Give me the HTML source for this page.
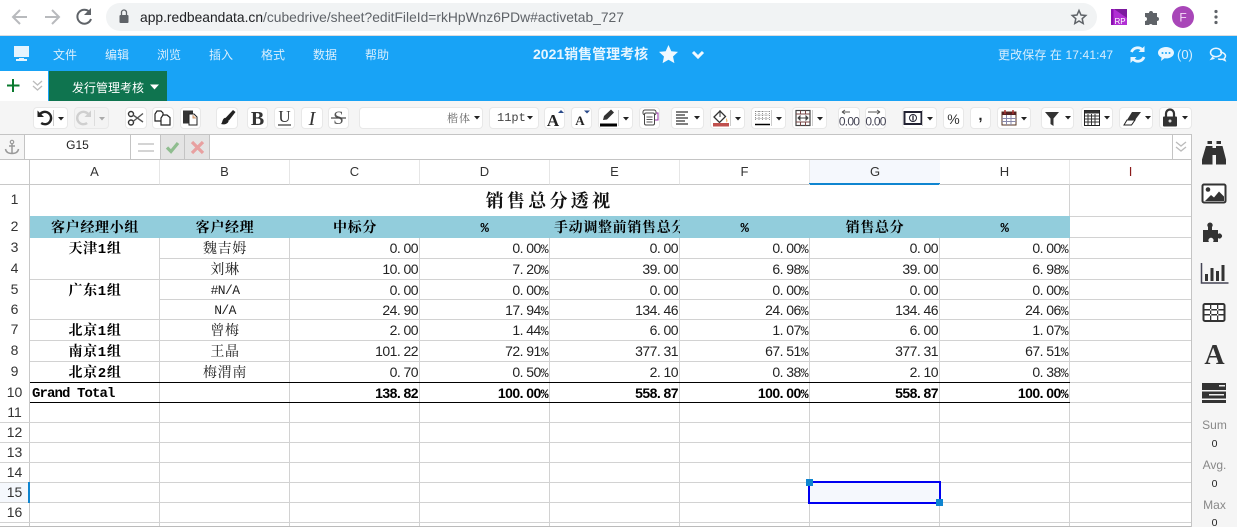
<!DOCTYPE html>
<html><head><meta charset="utf-8">
<style>
html,body{margin:0;padding:0;width:1237px;height:527px;overflow:hidden;background:#fff}
body{position:relative;font-family:"Liberation Sans","Noto Sans CJK SC",sans-serif}
div,span{position:absolute;box-sizing:border-box}
.nav{top:47px;font-size:12px;line-height:16px;color:#d8eefd;white-space:nowrap}
.b{top:107px;height:22px;background:#fff;border:1px solid #e8e8e8;border-radius:4px}
.h{left:30px;width:1161px;height:1px;background:#d2d2d2}
.v{top:184px;width:1px;height:342px;background:#d2d2d2}
.ch{top:160px;height:24px;width:130px;text-align:center;font-size:13px;line-height:24px;color:#333;border-right:1px solid #e6e6e6}
.rh{left:0;width:29px;text-align:center;font-size:14px;color:#333}
.r{left:30px;width:1040px;display:flex}
.r span{position:static;display:block;width:130px;height:100%;flex:none;padding-right:2px;white-space:nowrap;overflow:hidden;text-align:right;font-family:"Liberation Sans","Noto Serif CJK SC",sans-serif;font-size:14px;letter-spacing:-.55px;color:#222}
.r span i{font-style:normal;font-family:"Liberation Mono",monospace;font-size:13px}
.r span.m{text-align:center;padding:2px 0 0;letter-spacing:.67px;font-family:"Liberation Mono","Noto Serif CJK SC",serif;font-size:14px;color:#222}
.r span.g{font-weight:700;color:#000}
.side{left:1192px;width:45px;text-align:center;color:#888;font-size:12px;line-height:14px}
.z{color:#222;font-size:10.5px}
</style></head><body>

<!-- browser chrome -->
<div style="left:0;top:0;width:1237px;height:36px;background:#fff;border-bottom:1px solid #dadce0"></div>
<div style="left:106px;top:3px;width:991px;height:28px;border-radius:14px;background:#f1f3f4"></div>
<div style="left:140px;top:9px;height:17px;font-size:13.83px;line-height:17px;color:#5f6368;white-space:nowrap"><span style="position:static;color:#202124">app.redbeandata.cn</span>/cubedrive/sheet?editFileId=rkHpWnz6PDw#activetab_727</div>

<!-- blue header -->
<div style="left:0;top:36px;width:1237px;height:65px;background:#18a3f6"></div>
<div style="left:0;top:71px;width:48px;height:30px;background:#fff"></div>
<div style="left:48px;top:71px;width:119px;height:30px;background:#0f744f;border-left:1px solid #18a3f6"></div>
<div style="left:72px;top:80px;font-size:12px;line-height:16px;color:#fff;white-space:nowrap">发行管理考核</div>
<div class="nav" style="left:53px">文件</div>
<div class="nav" style="left:105px">编辑</div>
<div class="nav" style="left:157px">浏览</div>
<div class="nav" style="left:209px">插入</div>
<div class="nav" style="left:261px">格式</div>
<div class="nav" style="left:313px">数据</div>
<div class="nav" style="left:365px">帮助</div>
<div class="nav" style="left:533px;top:46px;font-size:14px;font-weight:700;color:#e6f5ff">2021销售管理考核</div>
<div class="nav" style="left:998px;font-size:12px;letter-spacing:.12px;color:#d8eefd">更改保存 在 17:41:47</div>
<div class="nav" style="left:1177px;font-size:13px;color:#d8eefd">(0)</div>

<!-- toolbar -->
<div style="left:0;top:101px;width:1237px;height:33px;background:#f5f5f5"></div>
<div class="b" style="left:33px;width:35px"></div>
<div class="b" style="left:74px;width:35px;background:#f3f3f3"></div>
<div class="b" style="left:125px;width:22px"></div>
<div class="b" style="left:152px;width:22px"></div>
<div class="b" style="left:180px;width:21px"></div>
<div class="b" style="left:216px;width:22px"></div>
<div class="b" style="left:247px;width:21px"></div>
<div class="b" style="left:274px;width:21px"></div>
<div class="b" style="left:301px;width:22px"></div>
<div class="b" style="left:328px;width:21px"></div>
<div class="b" style="left:359px;width:124px"></div>
<div class="b" style="left:489px;width:50px"></div>
<div class="b" style="left:544px;width:21px"></div>
<div class="b" style="left:571px;width:21px"></div>
<div class="b" style="left:598px;width:35px"></div>
<div class="b" style="left:639px;width:21px"></div>
<div class="b" style="left:671px;width:33px"></div>
<div class="b" style="left:710px;width:35px"></div>
<div class="b" style="left:751px;width:35px"></div>
<div class="b" style="left:792px;width:35px"></div>
<div class="b" style="left:838px;width:22px"></div>
<div class="b" style="left:865px;width:21px"></div>
<div class="b" style="left:902px;width:35px"></div>
<div class="b" style="left:943px;width:21px"></div>
<div class="b" style="left:970px;width:21px"></div>
<div class="b" style="left:997px;width:34px"></div>
<div class="b" style="left:1041px;width:33px"></div>
<div class="b" style="left:1081px;width:32px"></div>
<div class="b" style="left:1119px;width:34px"></div>
<div class="b" style="left:1159px;width:33px"></div>
<div style="left:447px;top:111px;font-family:'Noto Serif CJK SC',serif;font-size:11px;line-height:14px;color:#666;letter-spacing:1px">楷体</div>
<div style="left:497px;top:111px;font-family:'Liberation Mono',monospace;font-size:12px;line-height:14px;color:#444">11pt</div>

<!-- formula bar -->
<div style="left:0;top:134px;width:1192px;height:26px;background:#fff;border-top:1px solid #c4c4c4;border-bottom:1px solid #c4c4c4"></div>
<div style="left:0;top:135px;width:25px;height:24px;background:#f5f5f5;border-right:1px solid #c4c4c4"></div>
<div style="left:25px;top:137px;width:105px;text-align:center;font-size:12px;line-height:17px;color:#222">G15</div>
<div style="left:130px;top:135px;width:1px;height:24px;background:#c4c4c4"></div>
<div style="left:160px;top:135px;width:25px;height:24px;background:#e4e4e4;border-left:1px solid #c4c4c4;border-right:1px solid #c4c4c4"></div>
<div style="left:185px;top:135px;width:25px;height:24px;background:#e4e4e4;border-right:1px solid #c4c4c4"></div>
<div style="left:1172px;top:135px;width:1px;height:24px;background:#c4c4c4"></div>
<div style="left:1191px;top:134px;width:1px;height:393px;background:#c4c4c4"></div>

<!-- sidebar -->
<div style="left:1192px;top:134px;width:45px;height:393px;background:#f5f5f5"></div>

<!-- column headers -->
<div style="left:0;top:160px;width:1191px;height:24px;background:#fff"></div>
<div style="left:809px;top:160px;width:131px;height:25px;background:#f5f8fd;border-bottom:2px solid #0f85d0"></div>
<div class="ch" style="left:30px">A</div>
<div class="ch" style="left:160px">B</div>
<div class="ch" style="left:290px">C</div>
<div class="ch" style="left:420px">D</div>
<div class="ch" style="left:550px">E</div>
<div class="ch" style="left:680px">F</div>
<div class="ch" style="left:810px;border-right:0">G</div>
<div class="ch" style="left:940px">H</div>
<div class="ch" style="left:1070px;width:121px;color:#8b1a1a;border-right:0">I</div>
<div style="left:0;top:184px;width:1191px;height:1px;background:#c8c8c8"></div>
<div style="left:809px;top:183px;width:131px;height:2px;background:#0f85d0"></div>
<div style="left:29px;top:160px;width:1px;height:366px;background:#c8c8c8"></div>

<!-- grid lines -->
<div class="v" style="left:159px"></div>
<div class="v" style="left:289px"></div>
<div class="v" style="left:419px"></div>
<div class="v" style="left:549px"></div>
<div class="v" style="left:679px"></div>
<div class="v" style="left:809px"></div>
<div class="v" style="left:939px"></div>
<div class="v" style="left:1069px"></div>
<div class="h" style="top:216px"></div>
<div class="h" style="top:237px"></div>
<div class="h" style="top:258px"></div>
<div class="h" style="top:279px"></div>
<div class="h" style="top:299px"></div>
<div class="h" style="top:319px"></div>
<div class="h" style="top:340px"></div>
<div class="h" style="top:361px"></div>
<div class="h" style="top:382px"></div>
<div class="h" style="top:402px"></div>
<div class="h" style="top:422px;left:0;width:1191px"></div>
<div class="h" style="top:442px;left:0;width:1191px"></div>
<div class="h" style="top:462px;left:0;width:1191px"></div>
<div class="h" style="top:482px;left:0;width:1191px"></div>
<div class="h" style="top:502px;left:0;width:1191px"></div>
<div class="h" style="top:522px;left:0;width:1191px"></div>
<div class="h" style="top:526px;left:0;width:1191px;background:#bbb"></div>
<!-- title / merged cover -->
<div style="left:30px;top:185px;width:1039px;height:31px;background:#fff"></div>
<div style="left:30px;top:258px;width:129px;height:1px;background:#fff"></div>
<div style="left:30px;top:299px;width:129px;height:1px;background:#fff"></div>
<div style="left:30px;top:216px;width:1040px;height:22px;background:#92cddc"></div>
<div style="left:30px;top:382px;width:1040px;height:1px;background:#000"></div>
<div style="left:30px;top:402px;width:1040px;height:1px;background:#000"></div>

<!-- row headers -->
<div class="rh" style="top:191px;line-height:17px">1</div>
<div class="rh" style="top:218px;line-height:17px">2</div>
<div class="rh" style="top:239px;line-height:17px">3</div>
<div class="rh" style="top:260px;line-height:17px">4</div>
<div class="rh" style="top:281px;line-height:17px">5</div>
<div class="rh" style="top:301px;line-height:17px">6</div>
<div class="rh" style="top:321px;line-height:17px">7</div>
<div class="rh" style="top:342px;line-height:17px">8</div>
<div class="rh" style="top:363px;line-height:17px">9</div>
<div class="rh" style="top:384px;line-height:17px">10</div>
<div class="rh" style="top:404px;line-height:17px">11</div>
<div class="rh" style="top:424px;line-height:17px">12</div>
<div class="rh" style="top:444px;line-height:17px">13</div>
<div class="rh" style="top:464px;line-height:17px">14</div>
<div style="left:0;top:483px;width:29px;height:19px;background:#f5f8fd"></div>
<div style="left:28px;top:482px;width:2px;height:21px;background:#0f85d0"></div>
<div class="rh" style="top:484px;line-height:17px">15</div>
<div class="rh" style="top:504px;line-height:17px">16</div>

<!-- cells -->
<div style="left:30px;top:188px;width:1039px;text-align:center;font-family:'Noto Serif CJK SC',serif;font-size:18px;font-weight:700;letter-spacing:3.3px;line-height:24px;color:#111">销售总分透视</div>
<div class="r" style="top:217px;height:21px;line-height:20px">
<span class="m g">客户经理小组</span><span class="m g">客户经理</span><span class="m g">中标分</span><span class="m g">%</span><span class="m g" style="text-align:left;padding-left:4px">手动调整前销售总分</span><span class="m g">%</span><span class="m g">销售总分</span><span class="m g">%</span></div>
<div class="r" style="top:239px;height:19px;line-height:19px"><span class="m g">天津1组</span><span class="m">魏吉姆</span><span>0. 00</span><span>0. 00<i>%</i></span><span>0. 00</span><span>0. 00<i>%</i></span><span>0. 00</span><span>0. 00<i>%</i></span></div>
<div class="r" style="top:260px;height:19px;line-height:19px"><span class="m"></span><span class="m">刘琳</span><span>10. 00</span><span>7. 20<i>%</i></span><span>39. 00</span><span>6. 98<i>%</i></span><span>39. 00</span><span>6. 98<i>%</i></span></div>
<div class="r" style="top:281px;height:18px;line-height:18px"><span class="m g">广东1组</span><span class="m" style="font-size:13px;letter-spacing:-.6px;padding-top:1px">#N/A</span><span>0. 00</span><span>0. 00<i>%</i></span><span>0. 00</span><span>0. 00<i>%</i></span><span>0. 00</span><span>0. 00<i>%</i></span></div>
<div class="r" style="top:301px;height:18px;line-height:18px"><span class="m"></span><span class="m" style="font-size:13px;letter-spacing:-.6px;padding-top:1px">N/A</span><span>24. 90</span><span>17. 94<i>%</i></span><span>134. 46</span><span>24. 06<i>%</i></span><span>134. 46</span><span>24. 06<i>%</i></span></div>
<div class="r" style="top:321px;height:19px;line-height:19px"><span class="m g">北京1组</span><span class="m">曾梅</span><span>2. 00</span><span>1. 44<i>%</i></span><span>6. 00</span><span>1. 07<i>%</i></span><span>6. 00</span><span>1. 07<i>%</i></span></div>
<div class="r" style="top:342px;height:19px;line-height:19px"><span class="m g">南京1组</span><span class="m">王晶</span><span>101. 22</span><span>72. 91<i>%</i></span><span>377. 31</span><span>67. 51<i>%</i></span><span>377. 31</span><span>67. 51<i>%</i></span></div>
<div class="r" style="top:363px;height:19px;line-height:19px"><span class="m g">北京2组</span><span class="m">梅渭南</span><span>0. 70</span><span>0. 50<i>%</i></span><span>2. 10</span><span>0. 38<i>%</i></span><span>2. 10</span><span>0. 38<i>%</i></span></div>
<div class="r" style="top:384px;height:18px;line-height:18px"><span class="g" style="text-align:left;padding:1px 0 0 2px;font-family:'Liberation Mono',monospace;font-size:14px;letter-spacing:-.9px;overflow:visible">Grand Total</span><span></span><span class="g">138. 82</span><span class="g">100. 00<i>%</i></span><span class="g">558. 87</span><span class="g">100. 00<i>%</i></span><span class="g">558. 87</span><span class="g">100. 00<i>%</i></span></div>

<!-- selection -->
<div style="left:808px;top:481px;width:133px;height:23px;background:#f5f8fd;border:2px solid #0000f0"></div>
<div style="left:806px;top:479px;width:7px;height:7px;background:#0f85d0"></div>
<div style="left:936px;top:499px;width:7px;height:7px;background:#0f85d0"></div>

<!-- side labels -->
<div class="side" style="top:418px">Sum</div>
<div class="side z" style="top:437px">0</div>
<div class="side" style="top:458px">Avg.</div>
<div class="side z" style="top:477px">0</div>
<div class="side" style="top:498px">Max</div>
<div class="side z" style="top:516px">0</div>

<!-- icon overlay -->
<svg width="1237" height="527" viewBox="0 0 1237 527" style="position:absolute;left:0;top:0">
<!-- chrome -->
<path d="M27 17H14M20 10l-7 7 7 7" fill="none" stroke="#b8babd" stroke-width="2"/>
<path d="M45 17h13M52 10l7 7-7 7" fill="none" stroke="#b8babd" stroke-width="2"/>
<path d="M90 12.500A7 7 0 1 0 91 19" fill="none" stroke="#5f6368" stroke-width="2"/><path d="M91 8v7h-7z" fill="#5f6368"/>
<rect x="119.500" y="15" width="9" height="8" rx="1" fill="#5f6368"/><path d="M121.500 15v-2.500a2.500 2.500 0 0 1 5 0V15" fill="none" stroke="#5f6368" stroke-width="1.300"/>
<path d="M1079 10.500l2 4.500 4.800.5-3.600 3.200 1 4.800-4.200-2.500-4.200 2.500 1-4.800-3.600-3.200 4.800-.5z" fill="none" stroke="#5f6368" stroke-width="1.500"/>
<rect x="1111" y="9" width="16" height="16" fill="#b12fd4"/><path d="M1111 9h2.500v16H1111z" fill="#8a0fb0"/><path d="M1114 9h13v9z" fill="#7c1a9e"/><text x="1114.500" y="24" font-size="8" fill="#fff" font-family="Liberation Sans">RP</text>
<path d="M1145 13h4a2 2 0 0 1 4 0h4v4a2 2 0 0 1 0 4v4h-4.500a2 2 0 0 0-3.500 0h-4v-4a2 2 0 0 0 0-4z" fill="#5f6368"/>
<circle cx="1183" cy="17" r="11" fill="#a846b8"/><text x="1183" y="21.500" font-size="12" fill="#f4dcf7" text-anchor="middle" font-family="Liberation Sans">F</text>
<circle cx="1216" cy="11.500" r="1.600" fill="#5f6368"/><circle cx="1216" cy="17" r="1.600" fill="#5f6368"/><circle cx="1216" cy="22.500" r="1.600" fill="#5f6368"/>
<!-- blue bar -->
<path d="M14 46h15v11H14z" fill="#e4f4fe"/><path d="M19 58h5v1h3v2H16v-2h3z" fill="#e4f4fe"/>
<path d="M668.500 45l2.800 6.200 6.700.7-5 4.600 1.400 6.600-5.900-3.400-5.900 3.400 1.400-6.600-5-4.600 6.700-.7z" fill="#f0f9ff"/>
<path d="M693 52l5 5 5-5" fill="none" stroke="#f0f9ff" stroke-width="3"/>
<path d="M1131.500 52a6.500 6.500 0 0 1 11-2M1144 57a6.500 6.500 0 0 1-11 2" fill="none" stroke="#e8f6ff" stroke-width="2.800"/><path d="M1144.500 46v6h-6zM1130.500 63v-6h6z" fill="#e8f6ff"/>
<path d="M1166 47c4.500 0 8 2.500 8 5.700s-3.500 5.700-8 5.700l-1.500-.1-3.500 2.700.6-3.500c-2-1-3.600-2.700-3.600-4.800 0-3.200 3.500-5.700 8-5.700z" fill="#e8f6ff"/><circle cx="1162.500" cy="53" r="1" fill="#18a3f6"/><circle cx="1166" cy="53" r="1" fill="#18a3f6"/><circle cx="1169.500" cy="53" r="1" fill="#18a3f6"/>
<ellipse cx="1216" cy="52.500" rx="5.500" ry="4.200" fill="none" stroke="#e8f6ff" stroke-width="1.500"/><path d="M1213 57l-1.500 2 3-.8M1220 52c3 .3 5.500 2 5.500 4 0 1-.6 1.800-1.300 2.400l.8 2-2.600-1.200c-1.500.3-3 .2-4.300-.4" fill="none" stroke="#e8f6ff" stroke-width="1.500"/>
<path d="M150 84.500h9l-4.500 5z" fill="#fff"/>
<!-- tab row -->
<path d="M13 79v13M7 85.500h12.500" stroke="#0a7a2e" stroke-width="2"/>
<path d="M33 81l4.500 4 4.500-4M33 86l4.500 4 4.500-4" fill="none" stroke="#bbb" stroke-width="1.300"/>
<!-- undo -->
<path d="M39.800 114.500a6.200 6.200 0 1 1 1.400 8.500" fill="none" stroke="#222" stroke-width="2.400"/><path d="M37.500 110.500v6.500h6.500z" fill="#222"/>
<path d="M53.500 110v16" stroke="#ccc"/><path d="M58 117h6l-3 3.500z" fill="#222"/>
<!-- redo -->
<path d="M88.500 114.500a6.200 6.200 0 1 0-1.400 8.500" fill="none" stroke="#cfcfcf" stroke-width="2.400"/><path d="M91 110.500v6.500h-6.500z" fill="#cfcfcf"/>
<path d="M94.500 110v16" stroke="#ddd"/><path d="M99 117h6l-3 3.500z" fill="#aaa"/>
<!-- scissors -->
<circle cx="131" cy="114" r="2.500" fill="none" stroke="#333" stroke-width="1.400"/><circle cx="131" cy="122.500" r="2.500" fill="none" stroke="#333" stroke-width="1.400"/>
<path d="M133 115l10 7M133 121.500l10-8" stroke="#555" stroke-width="1.400"/>
<!-- copy -->
<path d="M157 111h4l2 2v8h-8v-7z" fill="#fff" stroke="#222" stroke-width="1.200"/><path d="M163 115h4l3 2.500v7.500h-9v-7z" fill="#fff" stroke="#222" stroke-width="1.200"/>
<!-- paste -->
<path d="M183 110.500h10v13h-10z" fill="#333"/><path d="M189 114h5l3 3v8h-8z" fill="#fff" stroke="#222"/><path d="M193 115v3h3" fill="#f0c090" stroke="#c97"/>
<!-- brush -->
<path d="M233 110l2.500 2-6.500 8.500-3.500-2.500z" fill="#222"/><path d="M224.500 118c2.500-.5 4.500 1 4 3.500-1 2.500-4.500 3.500-7.500 2.500 1.500-1 1-4.500 3.500-6z" fill="#222"/>
<!-- BIUS -->
<text x="257.500" y="125" font-family="Liberation Serif" font-weight="700" font-size="20" fill="#333" text-anchor="middle">B</text>
<text x="284.500" y="122" font-family="Liberation Serif" font-size="17" fill="#333" text-anchor="middle">U</text><path d="M278 125h13" stroke="#333" stroke-width="1.200"/>
<text x="312" y="125" font-family="Liberation Serif" font-style="italic" font-size="20" fill="#333" text-anchor="middle">I</text>
<text x="338.500" y="124" font-family="Liberation Serif" font-size="19" fill="#555" text-anchor="middle">S</text><path d="M331 118h15" stroke="#444" stroke-width="1.200"/>
<!-- carets -->
<path d="M474 116h6l-3 3.500zM527 116h6l-3 3.500z" fill="#222"/>
<!-- A+ A- -->
<text x="553" y="126" font-family="Liberation Serif" font-weight="700" font-size="17" fill="#222" text-anchor="middle">A</text><path d="M558 113h6l-3-3z" fill="#2a4a8a"/>
<text x="580" y="125" font-family="Liberation Serif" font-weight="700" font-size="13" fill="#222" text-anchor="middle">A</text><path d="M584 110.500h6l-3 3z" fill="#2a4a8a"/>
<!-- pen color -->
<path d="M600 123.500h17v3h-17z" fill="#000"/><path d="M604 116l7-6.500 3 3-7 7-4 .5z" fill="#333"/>
<path d="M618.500 110v16" stroke="#ccc"/><path d="M623 117h6l-3 3.500z" fill="#222"/>
<!-- print-like -->
<rect x="643" y="110" width="13" height="5" rx="2" fill="none" stroke="#444"/><rect x="644.500" y="113" width="10" height="12" rx="1.500" fill="#fff" stroke="#444"/><path d="M646.500 117h6M646.500 119.500h6M646.500 122h6" stroke="#555"/><path d="M656 113h2v7h-3" fill="none" stroke="#93a"/>
<!-- align -->
<path d="M676 112h12M676 115h9M676 118h12M676 121h9M676 124h12" stroke="#333" stroke-width="1.200"/><path d="M694 116h6l-3 3.500z" fill="#222"/>
<!-- fill -->
<path d="M714 117l6-6 5.500 5.500-6 6z" fill="#fff" stroke="#333" stroke-width="1.300"/><path d="M720 110v7" stroke="#333"/><path d="M713 123h16v3.500h-16z" fill="#c0504d"/><path d="M726 118c2 2 1.500 4 .5 4.500" fill="#e8a040"/>
<path d="M730.500 110v16" stroke="#ccc"/><path d="M735 117h6l-3 3.500z" fill="#222"/>
<!-- borders -->
<path d="M755.500 111.500h14M755.500 115h14M755.500 118.500h14M755.500 111v10M759 111v10M762.500 111v10M766 111v10M769.500 111v10" stroke="#777" stroke-width=".8" stroke-dasharray="1 1"/><path d="M755 124.500h15" stroke="#000" stroke-width="1.500"/>
<path d="M771.500 110v16" stroke="#ccc"/><path d="M776 117h6l-3 3.500z" fill="#222"/>
<!-- merge -->
<rect x="796" y="110.500" width="14" height="15" fill="none" stroke="#444" stroke-width="1.200"/><path d="M796 114h14M796 122h14M800.500 110.500v4M805.500 110.500v4M800.500 122v4M805.500 122v4" stroke="#744"/><path d="M798 118h10M798 118l2-2v4zM808 118l-2-2v4z" fill="#444" stroke="#444"/>
<path d="M812.500 110v16" stroke="#ccc"/><path d="M817 117h6l-3 3.500z" fill="#222"/>
<!-- dec/inc -->
<path d="M842 112h8M842 112l3-2M842 112l3 2" fill="none" stroke="#555"/><text x="849" y="125.500" font-family="Liberation Sans" font-size="12" fill="#445" text-anchor="middle" letter-spacing="-.8">0.00</text>
<path d="M868 112h12M880 112l-3-2M880 112l-3 2" fill="none" stroke="#555"/><text x="875.500" y="125.500" font-family="Liberation Sans" font-size="12" fill="#445" text-anchor="middle" letter-spacing="-.8">0.00</text>
<!-- money -->
<rect x="904.500" y="112" width="17" height="12" fill="#fff" stroke="#223" stroke-width="2"/><circle cx="913" cy="118" r="3.500" fill="#fff" stroke="#223"/><path d="M913 115.500v5" stroke="#223" stroke-width="1.300"/>
<path d="M922.500 110v16" stroke="#ccc"/><path d="M927 117h6l-3 3.500z" fill="#222"/>
<text x="953.500" y="124" font-family="Liberation Sans" font-size="14" fill="#333" text-anchor="middle">%</text>
<text x="980.500" y="120" font-family="Liberation Sans" font-weight="700" font-size="15" fill="#222" text-anchor="middle">,</text>
<!-- calendar -->
<rect x="1002" y="112" width="14" height="13" fill="#fff" stroke="#532" stroke-width="1"/><path d="M1002 112h14v3h-14z" fill="#522"/><path d="M1005 110v4M1013 110v4" stroke="#a33" stroke-width="1.500"/><path d="M1002 118.500h14M1002 121.500h14M1006.500 115v10M1011 115v10" stroke="#88a"/>
<path d="M1021 117h6l-3 3.500z" fill="#222"/>
<!-- filter -->
<path d="M1045 112h14l-5.500 6.500V126l-3-2v-5.500z" fill="#333"/><path d="M1065 116h6l-3 3.500z" fill="#222"/>
<!-- calc -->
<rect x="1084.500" y="110.500" width="15" height="15" fill="#fff" stroke="#222"/><path d="M1085 110.500h14v3h-14z" fill="#333"/><path d="M1085 116h14M1085 119h14M1085 122h14M1088 114v11M1091.500 114v11M1095 114v11" stroke="#333"/><path d="M1104 116h6l-3 3.500z" fill="#222"/>
<!-- eraser -->
<path d="M1124 125l3-5h8l-3.500 5z" fill="#fff" stroke="#222"/><path d="M1127 120l5-8h9l-6 8z" fill="#333"/><path d="M1145 116h6l-3 3.500z" fill="#222"/>
<!-- lock -->
<rect x="1163" y="116.500" width="14" height="10" rx="1" fill="#333"/><path d="M1166 117v-3.500a4 4 0 0 1 8 0v3.500" fill="none" stroke="#333" stroke-width="2.200"/><circle cx="1170" cy="121" r="1.500" fill="#ddd"/>
<path d="M1182 116h6l-3 3.500z" fill="#222"/>
<!-- formula -->
<circle cx="12" cy="142" r="1.700" fill="none" stroke="#999" stroke-width="1.200"/><path d="M12 144v9M9 146h6M5.500 149c.5 3 3 4.500 6.500 4.500s6-1.500 6.500-4.500" fill="none" stroke="#999" stroke-width="1.500"/>
<path d="M138 144h16M138 151h16" stroke="#bbb" stroke-width="1.200"/>
<path d="M167 147.500l4 4 7-8.500" fill="none" stroke="#8fbd8f" stroke-width="3.200"/>
<path d="M192 142l11 11M203 142l-11 11" stroke="#e8a0a0" stroke-width="3.200"/>
<path d="M1176 142l5 4 5-4M1176 147l5 4 5-4" fill="none" stroke="#bbb" stroke-width="1.300"/>
<!-- sidebar -->
<path d="M1207.500 141h4.500v3h-4.500zM1216.500 141h4.500v3h-4.500z" fill="#333"/>
<path d="M1206 146h6.500v18.500H1202v-5zM1216 146h6.500l3.500 13.500v5h-10z" fill="#333"/><path d="M1212.500 148h3.500v7h-3.500z" fill="#333"/>
<rect x="1202.500" y="184.500" width="23" height="18" rx="1.500" fill="#fff" stroke="#333" stroke-width="2"/><circle cx="1208" cy="189.500" r="2.300" fill="#333"/><path d="M1205 201l6-6 3 2.500 5-6 5 5v4.500z" fill="#333"/>
<path d="M1203 230h5v-3a2.700 2.700 0 1 1 4 0v3h6v4a2.500 2.500 0 1 1 0 4v4h-5a2.600 2.600 0 1 0-4 0h-6z" fill="#333"/>
<path d="M1201.500 263v20h27" fill="none" stroke="#445" stroke-width="1.500"/><path d="M1205 274h3v7h-3zM1210.500 268h3v13h-3zM1216 271h3v10h-3zM1221.500 265h3v16h-3z" fill="#333"/>
<rect x="1203.500" y="304" width="21" height="17" rx="1.500" fill="#fff" stroke="#333" stroke-width="2"/><path d="M1203 309h22v1.500h-22zM1203 314h22v1.500h-22zM1210 305v15h1.300v-15zM1217 305v15h1.300v-15z" fill="#333"/>
<text x="1214.500" y="364" font-family="Liberation Serif" font-weight="700" font-size="28" fill="#333" text-anchor="middle">A</text>
<path d="M1202 383h24v7h-24zM1202 391.500h24v7h-24zM1202 400h24v3h-24z" fill="#333"/><path d="M1219 385h6v1.500h-6zM1209 394h15v1.500h-15z" fill="#eee"/>
</svg>
</body></html>
